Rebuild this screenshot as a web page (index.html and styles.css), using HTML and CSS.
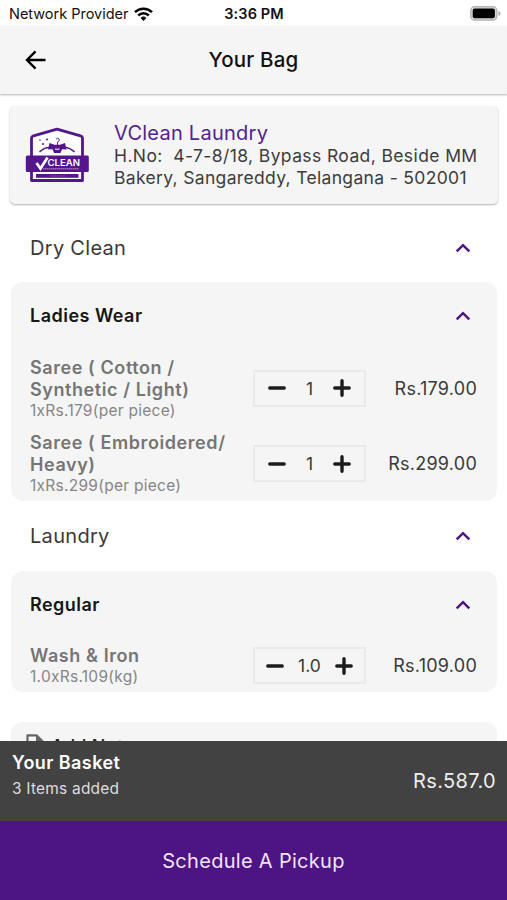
FILE: index.html
```html
<!DOCTYPE html>
<html lang="en">
<head>
<meta charset="utf-8">
<title>Your Bag</title>
<link rel="stylesheet" href="styles.css">
</head>
<body>
<svg class="defs" width="0" height="0" aria-hidden="true">
  <symbol id="up" viewBox="0 0 16 10"><path d="M1.7 8.3 8 2.2l6.3 6.1" fill="none" stroke="#4b1483" stroke-width="2.5"/></symbol>
  <symbol id="minus" viewBox="0 0 18 18"><path d="M1.8 9h14.4" stroke="#1c1c1c" stroke-width="3.4" stroke-linecap="round"/></symbol>
  <symbol id="plus" viewBox="0 0 18 18"><path d="M1.8 9h14.4M9 1.8v14.4" stroke="#1c1c1c" stroke-width="3.4" stroke-linecap="round"/></symbol>
</svg>
<div class="screen">
  <div class="status">
    <div class="carrier"><span>Network Provider</span>
      <svg width="19" height="14" viewBox="0 0 19 14"><g fill="none" stroke="#000" stroke-width="2.5"><path d="M1 5.2a12.2 12.2 0 0 1 17 0"/><path d="M4.2 8.5a7.6 7.6 0 0 1 10.6 0"/></g><path d="M6.6 11a4.2 4.2 0 0 1 5.8 0L9.5 13.9z"/></svg>
    </div>
    <div class="clock">3:36 PM</div>
    <div class="battery"><svg width="31" height="15" viewBox="0 0 31 15"><rect x=".8" y=".8" width="26" height="13.2" rx="3.8" fill="#ddd" stroke="#b4b4b4" stroke-width="1.4"/><rect x="2.7" y="2.6" width="22.2" height="9.6" rx="2" fill="#000"/><path d="M28.5 5v5q2-.8 2-2.500t-2-2.500z" fill="#aaa"/></svg></div>
  </div>
  <header class="bar">
    <svg class="back" width="22" height="20" viewBox="0 0 22 20"><path d="M10.500 1.300 2 10l8.500 8.700M2.300 10H20.500" fill="none" stroke="#000" stroke-width="2.4"/></svg>
    <h1>Your Bag</h1>
  </header>
  <main class="content">
    <section class="store">
      <svg class="logo" width="66" height="56" viewBox="0 0 66 56">
        <path d="M6.500 30V11.500Q6.500 9.500 8.500 8.800L32 2.200 55.500 8.800Q57.500 9.500 57.500 11.500V53.500H6.500z" fill="#fff" stroke="#54158f" stroke-width="2.8" stroke-linejoin="round"/>
        <path d="M14.500 25q5-5 11-4.500h13q6-.5 11 4.500" fill="none" stroke="#54158f" stroke-width="1.600"/>
        <path d="M24.500 16l5 1.800h5.500l5-1.800 1.500 6.500-4.500-.3-1.500 3.800h-6.500l-1.500-3.800-4.500.3z" fill="#54158f"/>
        <path d="M30 22.200h4.500" stroke="#fff" stroke-width="1"/>
        <path d="M32.500 18v-3q2.500-.8 1.800-2.800-1.500-2-3.300 0" fill="none" stroke="#54158f" stroke-width=".9"/>
        <g fill="#54158f"><circle cx="15" cy="13" r=".8"/><circle cx="22" cy="12.500" r="1"/><circle cx="18" cy="17" r="1"/></g>
        <rect x=".8" y="28.500" width="63" height="16.500" rx="1.500" fill="#54158f"/>
        <path d="M11.500 36l4 5.500L22.500 30.500" fill="none" stroke="#fff" stroke-width="2.700"/>
        <text class="logo-name" x="22.500" y="39" textLength="32.500" lengthAdjust="spacingAndGlyphs">CLEAN</text>
        <path d="M18 41.800h36" stroke="#b99bd2" stroke-width="1" stroke-dasharray="1.500 .5"/>
        <path d="M9 46h46v5.500H9z" fill="#fff"/>
        <rect x="11" y="47" width="42.500" height="3.800" fill="#54158f"/>
        <path d="M25 49h15" stroke="#8c61b3" stroke-width=".8" stroke-dasharray="1.500 .7"/>
      </svg>
      <div class="store-info">
        <h2>VClean Laundry</h2>
        <p><span class="addr1">H.No:&nbsp; 4-7-8/18, Bypass Road, Beside MM</span><br>Bakery, Sangareddy, Telangana - 502001</p>
      </div>
    </section>

    <div class="category"><span>Dry Clean</span><svg class="chev"><use href="#up"/></svg></div>
    <section class="group">
      <div class="group-head"><span>Ladies Wear</span><svg class="chev"><use href="#up"/></svg></div>
      <div class="item">
        <div class="desc"><strong>Saree ( Cotton /<br>Synthetic / Light)</strong><small>1xRs.179(per piece)</small></div>
        <div class="stepper"><svg class="sign"><use href="#minus"/></svg><span>1</span><svg class="sign"><use href="#plus"/></svg></div>
        <div class="price">Rs.179.00</div>
      </div>
      <div class="item">
        <div class="desc"><strong>Saree ( Embroidered/<br>Heavy)</strong><small>1xRs.299(per piece)</small></div>
        <div class="stepper"><svg class="sign"><use href="#minus"/></svg><span>1</span><svg class="sign"><use href="#plus"/></svg></div>
        <div class="price">Rs.299.00</div>
      </div>
    </section>

    <div class="category second"><span>Laundry</span><svg class="chev"><use href="#up"/></svg></div>
    <section class="group">
      <div class="group-head"><span>Regular</span><svg class="chev"><use href="#up"/></svg></div>
      <div class="item single">
        <div class="desc"><strong>Wash &amp; Iron</strong><small>1.0xRs.109(kg)</small></div>
        <div class="stepper wide"><svg class="sign"><use href="#minus"/></svg><span>1.0</span><svg class="sign"><use href="#plus"/></svg></div>
        <div class="price">Rs.109.00</div>
      </div>
    </section>

    <section class="note">
      <svg width="20" height="20" viewBox="0 0 20 20"><path d="M2.500 1.300h9l6 6v11h-15z" fill="none" stroke="#666" stroke-width="2.200" stroke-linejoin="round"/><path d="M11 1l8 8h-8z" fill="#666"/></svg>
      <span>Add Note</span>
    </section>
  </main>
  <footer>
    <div class="basket">
      <div><div class="basket-title">Your Basket</div><div class="basket-count">3 Items added</div></div>
      <div class="total">Rs.587.0</div>
    </div>
    <div class="pickup"><span>Schedule A Pickup</span></div>
  </footer>
</div>
</body>
</html>
```
FILE: styles.css
```css
* { box-sizing: border-box; }
body { margin: 0; background: #fff; font-family: Inter, "Liberation Sans", sans-serif; color: #3a3a3a; }
h1, h2, p { margin: 0; font-weight: 400; }
svg { display: block; flex: none; }
.defs { position: absolute; }
.screen { width: 507px; height: 900px; display: flex; flex-direction: column; overflow: hidden; }
.status { flex: none; height: 26px; padding: 1px 6px 0 9px; display: grid; grid-template-columns: 1fr auto 1fr; align-items: center; color: #111; }
.carrier { display: flex; align-items: center; gap: 6px; font-size: 14.500px; letter-spacing: -.02px; white-space: nowrap; }
.clock { font-size: 14.500px; font-weight: 600; letter-spacing: .1px; margin-right: 2px; }
.battery { justify-self: end; }
.bar { flex: none; height: 68px; background: #f5f5f5; box-shadow: 0 1px 2px rgba(0,0,0,.3); display: grid; grid-template-columns: 60px 1fr 60px; align-items: center; }
.back { margin-left: 25px; }
.bar h1 { text-align: center; font-size: 20.500px; font-weight: 500; line-height: 24px; color: #111; letter-spacing: .2px; margin-top: -1px; }
.content { flex: 1; min-height: 0; overflow: hidden; padding: 12px 10px 0 10px; }
.store { width: 488px; height: 98px; background: #f5f5f5; border-radius: 5px; box-shadow: 0 1px 2px rgba(0,0,0,.3); display: flex; padding: 16px 0 0 15px; }
.logo { margin-top: 5px; }
.logo-name { font: 600 9px Inter, sans-serif; fill: #fff; }
.store-info { margin-left: 23px; white-space: nowrap; }
.store-info h2 { font-size: 20px; line-height: 23px; color: #542193; letter-spacing: .25px; }
.store-info p { font-size: 17.500px; line-height: 22px; color: #3c3c3c; letter-spacing: .33px; }
.addr1 { letter-spacing: .39px; }
.category { height: 69px; margin-top: 9px; padding: 0 26px 0 20px; display: flex; align-items: center; justify-content: space-between; font-size: 20px; letter-spacing: .3px; }
.category.second { height: 70px; margin-top: 0; }
.chev { width: 16px; height: 10px; }
.group { margin: 0 0 0 1px; background: #f5f5f5; border-radius: 12px; width: 486px; }
.group-head { height: 68px; padding: 0 26px 1px 19px; display: flex; align-items: center; justify-content: space-between; font-size: 18px; font-weight: 600; color: #161616; letter-spacing: .48px; }
.item { height: 75.500px; padding: 1px 20px 0 19px; display: flex; align-items: center; }
.item.single { height: 53px; padding-top: 0; }
.desc { width: 223px; white-space: nowrap; }
.desc strong { display: block; font-size: 18px; line-height: 22px; font-weight: 600; color: #757575; letter-spacing: .58px; }
.desc small { display: block; font-size: 15.500px; line-height: 19px; color: #858585; letter-spacing: .27px; }
.stepper { width: 113px; height: 37px; border: 2px solid #eaeaea; display: flex; align-items: center; justify-content: center; gap: 20px; font-size: 17.500px; }
.stepper.wide { gap: 14px; }
.sign { width: 18px; height: 18px; }
.price { flex: 1; text-align: right; font-size: 18px; white-space: nowrap; letter-spacing: .25px; }
.note { width: 486px; height: 70px; margin: 30px 0 0 1px; background: #f5f5f5; border-radius: 12px; padding: 12px 14px; display: flex; gap: 6px; align-items: flex-start; font-size: 18px; font-weight: 500; line-height: 26px; color: #222; letter-spacing: .3px; }
footer { flex: none; position: relative; }
.basket { height: 80px; padding: 0 11px 0 12px; background: #424242; display: flex; justify-content: space-between; align-items: center; color: #eee; }
.basket-title { font-size: 18px; line-height: 22px; font-weight: 600; color: #fff; letter-spacing: .42px; margin-top: -12px; }
.basket-count { font-size: 15.500px; line-height: 20px; margin-top: 5px; letter-spacing: .2px; color: #ddd; }
.total { font-size: 20px; letter-spacing: .35px; }
.pickup { height: 79px; background: #4d1484; color: #f3e5ff; display: flex; align-items: center; justify-content: center; font-size: 20px; letter-spacing: .3px; }
```
